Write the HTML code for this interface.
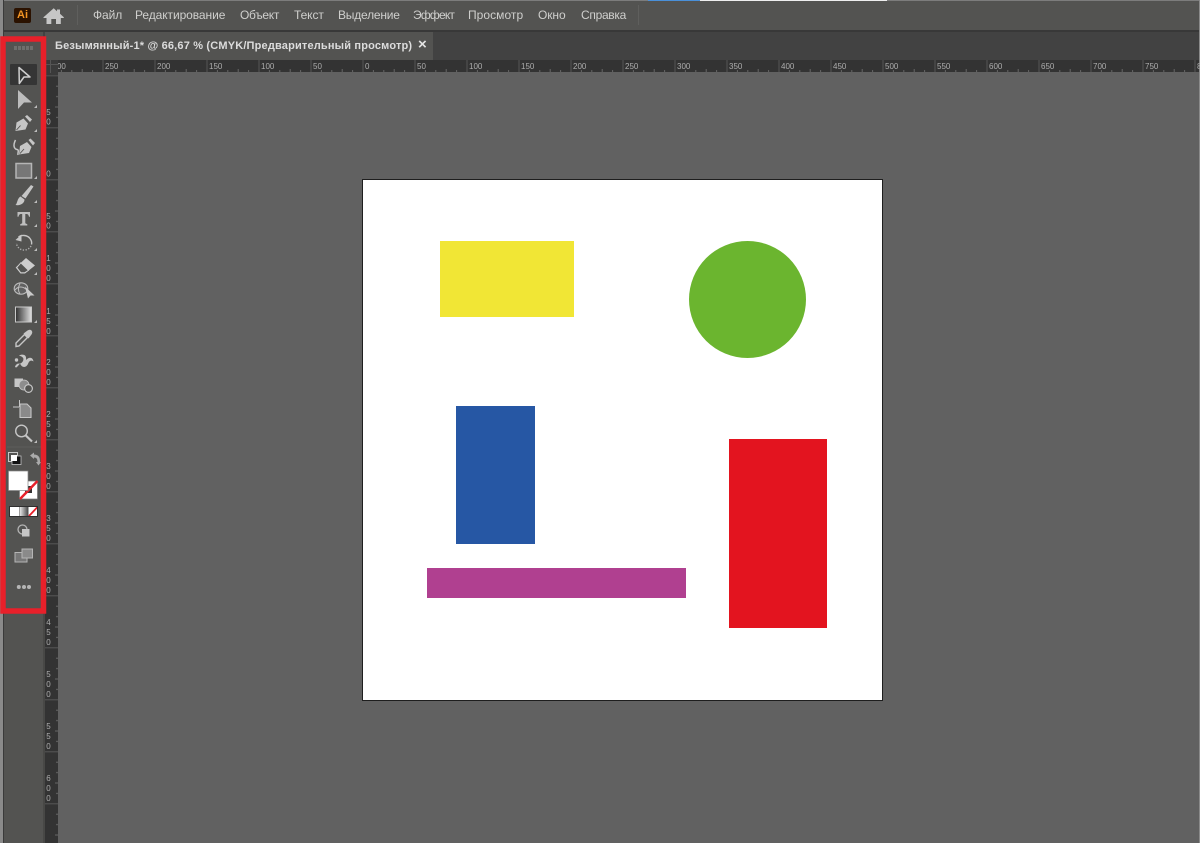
<!DOCTYPE html>
<html lang="ru"><head><meta charset="utf-8"><title>Illustrator</title>
<style>
html,body{margin:0;padding:0;background:#616161}
body{width:1200px;height:843px;position:relative;overflow:hidden;font-family:"Liberation Sans","DejaVu Sans",sans-serif}
#w{position:absolute;left:0;top:0;width:1200px;height:843px;overflow:hidden;filter:blur(.35px)}
.a{position:absolute}
.m{position:absolute;top:8px;font-size:12px;line-height:14px;color:#cfcfcd;white-space:nowrap;letter-spacing:-.08px}
svg{position:absolute;left:0;top:0}
</style></head><body><div id="w">
<div class="a" style="left:0;top:0;width:1200px;height:1px;background:#7c7c7c"></div>
<div class="a" style="left:648px;top:0;width:52px;height:1px;background:#4a90d9"></div>
<div class="a" style="left:700px;top:0;width:187px;height:1px;background:#eee"></div>
<div class="a" style="left:0;top:1px;width:1200px;height:29px;background:#535351"></div>
<div class="a" style="left:0;top:30px;width:1200px;height:2px;background:#383838"></div>
<div class="a" style="left:0;top:32px;width:1200px;height:28px;background:#424242"></div>
<div class="a" style="left:45px;top:32px;width:388px;height:28px;background:#535351"></div>
<div class="a" style="left:4px;top:32px;width:39px;height:811px;background:#535351"></div>
<div class="a" style="left:0;top:0;width:3px;height:843px;background:#8a8a8a"></div>
<div class="a" style="left:3px;top:0;width:1px;height:843px;background:#3a3a3a"></div>
<div class="a" style="left:1199px;top:0;width:1px;height:843px;background:#8a8a8a"></div>
<div class="a" style="left:43px;top:60px;width:2px;height:783px;background:#484846"></div>

<div class="a" style="left:14px;top:8px;width:17px;height:15px;background:#2b1200;border-radius:2px;color:#f29423;font-size:11px;font-weight:bold;line-height:15px;text-align:center">Ai</div>

<div class="m" style="left:93px">Файл</div>
<div class="m" style="left:135px">Редактирование</div>
<div class="m" style="left:240px;letter-spacing:-.3px">Объект</div>
<div class="m" style="left:294px">Текст</div>
<div class="m" style="left:338px;letter-spacing:-.2px">Выделение</div>
<div class="m" style="left:413px;letter-spacing:-.8px">Эффект</div>
<div class="m" style="left:468px;letter-spacing:.05px">Просмотр</div>
<div class="m" style="left:538px">Окно</div>
<div class="m" style="left:581px;letter-spacing:-.3px">Справка</div>
<div class="a" style="left:77px;top:5px;width:1px;height:20px;background:#5f5f5d"></div>
<div class="a" style="left:638px;top:5px;width:1px;height:20px;background:#5f5f5d"></div>

<div class="a" style="left:55px;top:39px;font-size:11px;line-height:14px;font-weight:bold;color:#dcdcdc;white-space:nowrap;letter-spacing:.175px">Безымянный-1* @ 66,67 % (CMYK/Предварительный просмотр)</div>
<div class="a" style="left:418px;top:37px;font-size:15px;line-height:16px;font-weight:bold;color:#e4e4e4">×</div>

<!-- artboard -->
<div class="a" style="left:362px;top:179px;width:519px;height:520px;background:#fff;border:1px solid #1e1e1e"></div>
<div class="a" style="left:440px;top:241px;width:134px;height:76px;background:#f1e635"></div>
<div class="a" style="left:689px;top:241px;width:117px;height:117px;border-radius:50%;background:#6bb52f"></div>
<div class="a" style="left:456px;top:406px;width:79px;height:138px;background:#2657a4"></div>
<div class="a" style="left:729px;top:439px;width:98px;height:189px;background:#e3141f"></div>
<div class="a" style="left:427px;top:568px;width:259px;height:30px;background:#b04090"></div>

<svg width="1200" height="843" viewBox="0 0 1200 843" xmlns="http://www.w3.org/2000/svg" font-family="Liberation Sans, sans-serif">
<defs>
<pattern id="hr" x="50.5" y="60" width="52" height="12" patternUnits="userSpaceOnUse">
<rect width="52" height="12" fill="#333"/>
<rect x="0" y="0" width="1" height="12" fill="#565656"/>
<rect x="10.4" y="10" width="1" height="2" fill="#666"/>
<rect x="20.8" y="10" width="1" height="2" fill="#666"/>
<rect x="31.2" y="9" width="1" height="3" fill="#666"/>
<rect x="41.6" y="10" width="1" height="2" fill="#666"/>
</pattern>
<pattern id="vr" x="45" y="23.3" width="13" height="52" patternUnits="userSpaceOnUse">
<rect width="13" height="52" fill="#333"/>
<rect x="0" y="0" width="13" height="1" fill="#565656"/>
<rect x="11" y="10.4" width="2" height="1" fill="#666"/>
<rect x="11" y="20.8" width="2" height="1" fill="#666"/>
<rect x="10" y="31.2" width="3" height="1" fill="#666"/>
<rect x="11" y="41.6" width="2" height="1" fill="#666"/>
</pattern>
<clipPath id="cr"><rect x="58" y="60" width="1142" height="12"/></clipPath>
<linearGradient id="g1" x1="0" x2="1" y1="0" y2="0"><stop offset="0" stop-color="#2f2f2f"/><stop offset="1" stop-color="#e0e0e0"/></linearGradient>
<linearGradient id="g2" x1="0" x2="1" y1="0" y2="0"><stop offset="0" stop-color="#eee"/><stop offset="1" stop-color="#555"/></linearGradient>
</defs>
<rect x="45" y="60" width="13" height="783" fill="url(#vr)"/>
<rect x="58" y="60" width="1141" height="12" fill="url(#hr)"/>
<rect x="45" y="60" width="13" height="15" fill="#3a3a3a"/>
<path d="M45.500 64.500H58M50.500 60V73" stroke="#555" stroke-width="1" fill="none"/>

<g font-size="8" fill="#adadad" clip-path="url(#cr)">
<text x="52.500" y="69">300</text><text x="105" y="69">250</text><text x="157" y="69">200</text><text x="209" y="69">150</text><text x="261" y="69">100</text><text x="313" y="69">50</text><text x="365" y="69">0</text><text x="417" y="69">50</text><text x="469" y="69">100</text><text x="521" y="69">150</text><text x="573" y="69">200</text><text x="625" y="69">250</text><text x="677" y="69">300</text><text x="729" y="69">350</text><text x="781" y="69">400</text><text x="833" y="69">450</text><text x="885" y="69">500</text><text x="937" y="69">550</text><text x="989" y="69">600</text><text x="1041" y="69">650</text><text x="1093" y="69">700</text><text x="1145" y="69">750</text><text x="1197" y="69">800</text>
</g>
<g font-size="8" fill="#adadad" text-anchor="middle">
<text x="48.500" y="115">5</text><text x="48.500" y="124.500">0</text>
<text x="48.500" y="176.500">0</text>
<text x="48.500" y="219">5</text><text x="48.500" y="228.500">0</text>
<text x="48.500" y="261">1</text><text x="48.500" y="271">0</text><text x="48.500" y="281">0</text>
<text x="48.500" y="314">1</text><text x="48.500" y="324">5</text><text x="48.500" y="334">0</text>
<text x="48.500" y="365">2</text><text x="48.500" y="375">0</text><text x="48.500" y="385">0</text>
<text x="48.500" y="417">2</text><text x="48.500" y="427">5</text><text x="48.500" y="437">0</text>
<text x="48.500" y="469">3</text><text x="48.500" y="479">0</text><text x="48.500" y="489">0</text>
<text x="48.500" y="521">3</text><text x="48.500" y="531">5</text><text x="48.500" y="541">0</text>
<text x="48.500" y="573">4</text><text x="48.500" y="583">0</text><text x="48.500" y="593">0</text>
<text x="48.500" y="625">4</text><text x="48.500" y="635">5</text><text x="48.500" y="645">0</text>
<text x="48.500" y="677">5</text><text x="48.500" y="687">0</text><text x="48.500" y="697">0</text>
<text x="48.500" y="729">5</text><text x="48.500" y="739">5</text><text x="48.500" y="749">0</text>
<text x="48.500" y="781">6</text><text x="48.500" y="791">0</text><text x="48.500" y="801">0</text>
</g>

<!-- home -->
<path d="M53.700 8.300L57 11.200V9.500H60V13.800L63.800 17.300V18H60.800V24H56V19H51.300V24H46.500V18H43.500V17.300Z" fill="#c6c6c6"/>

<!-- panel -->
<rect x="6" y="42" width="35.500" height="566" fill="#535351"/>
<g fill="#6f6f6d"><rect x="14" y="46" width="3" height="4"/><rect x="18" y="46" width="3" height="4"/><rect x="22" y="46" width="3" height="4"/><rect x="26" y="46" width="3" height="4"/><rect x="30" y="46" width="3" height="4"/></g>
<rect x="10" y="64" width="27" height="21" rx="1" fill="#353535"/>

<!-- selection -->
<path d="M19 67.500L30 77H24L19.300 83.500Z" fill="none" stroke="#cfcfcf" stroke-width="1.500" stroke-linejoin="round"/>
<!-- direct selection -->
<path d="M18 90L32 102.500H24L18 109Z" fill="#bdbdbd"/>
<!-- pen -->
<path d="M15.500 131L16.500 122.500L23.500 118.500L28 123.500L25.500 129.500Z" fill="#c6c6c6"/>
<path d="M25 116.500L27 115L32 119.500L30 122Z" fill="#c6c6c6"/>
<path d="M16.500 130L20.500 125.500" stroke="#535351" stroke-width=".9"/>
<!-- curvature pen -->
<path d="M19 154.500L20 146L27 142L31.500 147L29 153Z" fill="#c6c6c6"/>
<path d="M28.500 140L30.500 138.500L35 143L33 145.500Z" fill="#c6c6c6"/>
<path d="M20 153.500L24 149" stroke="#535351" stroke-width=".9"/>
<path d="M15.500 140C12.500 146 14.500 149 17 149.500C19.500 150 17.500 152.500 18 155" fill="none" stroke="#c6c6c6" stroke-width="1.500"/>
<!-- rectangle -->
<rect x="16" y="163.500" width="15.500" height="14.500" fill="#777" stroke="#b5b5b5" stroke-width="1.500"/>
<!-- brush -->
<path d="M31 185L33.500 186.500L25.500 198.500L21.500 196Z" fill="#c6c6c6"/>
<path d="M20.500 196.500L24.500 199.500C24.500 203.500 20 206 15.500 205C17.500 203.500 17 198.500 20.500 196.500Z" fill="#c6c6c6"/>
<!-- type -->
<path d="M17.500 212H30V216.800H29C28.500 214.800 28 214 26 214H25.300V223.300L27.300 224.300V225.500H20.200V224.300L22.200 223.300V214H21.500C19.500 214 19 214.800 18.500 216.800H17.500Z" fill="#bebebe"/>
<!-- rotate -->
<path d="M18.500 237C21 235 27 234.500 30 238.500C31.500 240.500 32 242.500 31.500 244.500" fill="none" stroke="#c6c6c6" stroke-width="1.400"/>
<path d="M31 246C29 250 23 251.500 19.500 248.500C17.500 247 16.500 245 16.500 243" fill="none" stroke="#aaa" stroke-width="1.400" stroke-dasharray="1.300 1.500"/>
<path d="M15.500 240L21.500 234.500V241.500Z" fill="#c6c6c6"/>
<!-- eraser -->
<path d="M26 258L35 265.500L25 273.500H20.500L15.700 267.500Z" fill="#cdcdcd"/>
<path d="M20.800 262.800L28.500 270.300L24.700 272.800H20.800L16.700 267.600Z" fill="#535351" stroke="#cdcdcd" stroke-width="1"/>
<!-- shape builder -->
<ellipse cx="21" cy="288.500" rx="6.800" ry="5.700" fill="#616161" stroke="#bdbdbd" stroke-width="1.100"/>
<path d="M15 290C18 286 23 286 27 290M20 283.500C18 287 18 291 20 294" stroke="#bdbdbd" stroke-width="1" fill="none"/>
<path d="M25 286.500L34.500 295.500H30.500L28 298.500Z" fill="#c9c9c9"/>
<!-- gradient -->
<rect x="15.500" y="307" width="16" height="15" fill="url(#g1)" stroke="#c9c9c9" stroke-width="1"/>
<!-- eyedropper -->
<path d="M16 346.500L16 343L24.500 334.500L27.500 337.500L19 346Z" fill="none" stroke="#c6c6c6" stroke-width="1.400"/>
<path d="M23.500 333.500L27.500 330.500C29 329.500 30.500 329.500 31.500 330.500C32.500 331.500 32.500 333 31.500 334.500L28.500 338.500Z" fill="#c6c6c6"/>
<!-- blend -->
<path d="M15 366.500C18 361 20 366 23 361C25 357 20 356 19 355.500C22 354 27 354 26 360C30 356 33 358 33.500 361.500C31 359.500 29 361 28 364C26 368 22 368 20 363.500C18 366 16 369 15 366.500Z" fill="#c6c6c6"/>
<circle cx="16.500" cy="360" r="1.700" fill="#c6c6c6"/>
<!-- live paint -->
<rect x="14.500" y="378.500" width="8.500" height="8.500" fill="#c6c6c6"/>
<circle cx="24" cy="385" r="5" fill="#8d8d8d" stroke="#c6c6c6" stroke-width=".8"/>
<circle cx="28.500" cy="388.500" r="3.900" fill="#535351" stroke="#c6c6c6" stroke-width="1.200"/>
<!-- artboard tool -->
<path d="M20 404H27L31 408V417.500H20Z" fill="#8a8a8a" stroke="#c6c6c6" stroke-width="1.100"/>
<path d="M13 407H19M19.500 400V407" stroke="#c6c6c6" stroke-width="1" fill="none"/>
<!-- zoom -->
<circle cx="21.500" cy="431" r="5.800" fill="none" stroke="#c6c6c6" stroke-width="1.400"/>
<path d="M25.800 435.500L32 441.500" stroke="#c6c6c6" stroke-width="2.200"/>
<!-- corner triangles -->
<g fill="#bdbdbd">
<path d="M37 105V108H34Z"/><path d="M37 129V132H34Z"/><path d="M37 176V179H34Z"/><path d="M37 200V203H34Z"/><path d="M37 224V227H34Z"/><path d="M37 248V251H34Z"/><path d="M37 272V275H34Z"/><path d="M37 320V323H34Z"/><path d="M37 440V443H34Z"/>
</g>
<path d="M7 447H41" stroke="#5e5e5c" stroke-width="1"/>
<!-- default colors -->
<rect x="8.500" y="452.500" width="9" height="9" fill="#535351" stroke="#c6c6c6" stroke-width="1"/>
<rect x="12" y="456" width="9" height="8.500" fill="#111" stroke="#c6c6c6" stroke-width=".8"/>
<rect x="11" y="455" width="6" height="6" fill="#fff"/>
<!-- swap -->
<path d="M30 455.500L34 452.500V454.500C38 454.500 40 457 40 461V462H41L38.500 465.500L36 462H37.500C37.500 459 36.500 457.500 34 457.500V459Z" fill="#aaa"/>
<!-- stroke -->
<rect x="19.500" y="481" width="18" height="18" fill="#fff" stroke="#777" stroke-width=".7"/>
<rect x="25" y="486" width="7" height="7" fill="#333"/>
<path d="M20 499L37.500 481" stroke="#e8202a" stroke-width="2.400"/>
<!-- fill -->
<rect x="8.500" y="471" width="19.500" height="19.500" fill="#fff" stroke="#888" stroke-width=".7"/>
<!-- color/gradient/none -->
<rect x="10" y="507" width="9" height="9" fill="#fff"/>
<rect x="19.500" y="507" width="8" height="9" fill="url(#g2)"/>
<rect x="28.500" y="507" width="9" height="9" fill="#fff"/>
<path d="M29 516L37.500 507" stroke="#e8202a" stroke-width="1.800"/>
<rect x="9.500" y="506.500" width="28" height="10" fill="none" stroke="#2f2f2f" stroke-width="1"/>
<!-- draw mode -->
<circle cx="22.500" cy="529.500" r="4.500" fill="none" stroke="#b5b5b5" stroke-width="1.300"/>
<rect x="22" y="529" width="7.500" height="7.500" fill="#c6c6c6"/>
<!-- screen mode -->
<rect x="15" y="552.500" width="12" height="9.500" fill="#777" stroke="#b5b5b5" stroke-width="1"/>
<rect x="22" y="549" width="10.500" height="9" fill="#8a8a8a" stroke="#b5b5b5" stroke-width="1"/>
<!-- more -->
<g fill="#b5b5b5"><circle cx="18.800" cy="587" r="2"/><circle cx="24" cy="587" r="2"/><circle cx="29" cy="587" r="2"/></g>
<!-- red frame -->
<rect x="3" y="39" width="40.500" height="572" fill="none" stroke="#e8202a" stroke-width="5.500"/>
</svg>
</div></body></html>
